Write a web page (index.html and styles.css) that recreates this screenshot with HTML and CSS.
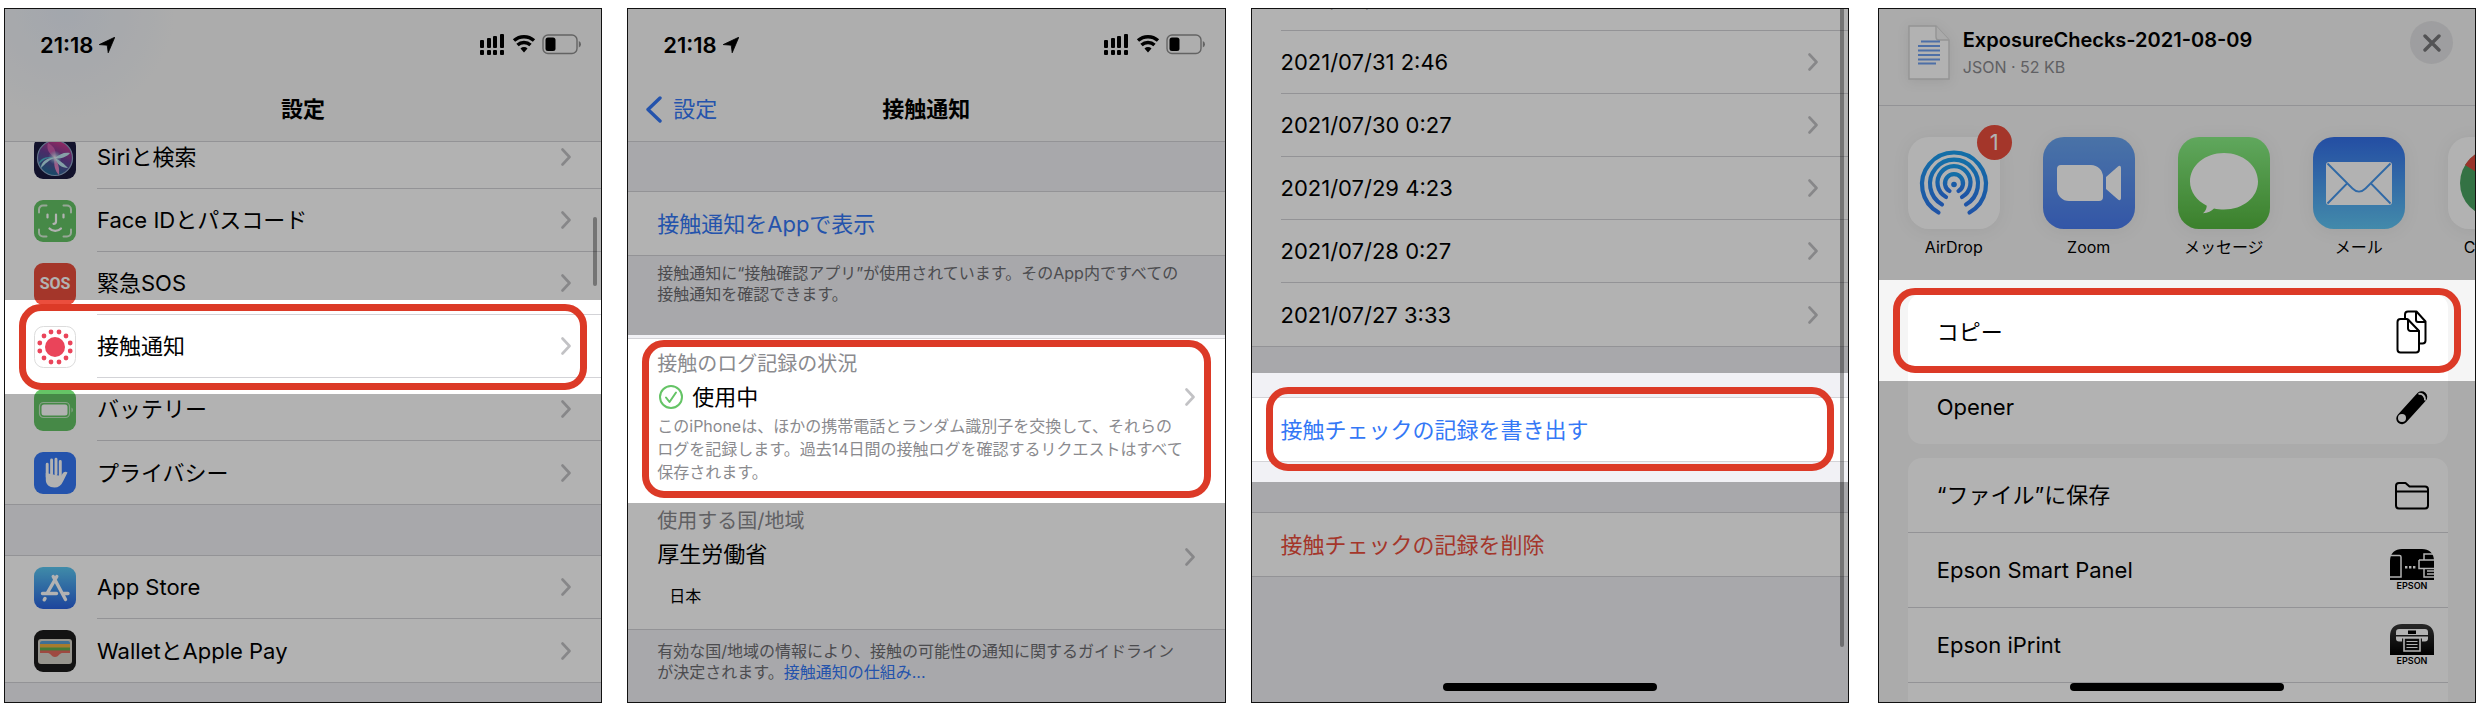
FILE: index.html
```html
<!DOCTYPE html>
<html lang="ja">
<head>
<meta charset="utf-8">
<meta name="viewport" content="width=device-width, initial-scale=1">
<title>接触通知の記録を書き出す手順</title>
<link rel="stylesheet" href="styles.css">
</head>
<body>
<svg class="defs" width="0" height="0" aria-hidden="true">
  <defs>
    <linearGradient id="g-store" x1="0" y1="0" x2="0" y2="1"><stop offset="0" stop-color="#5cc8f2"/><stop offset="1" stop-color="#2a63e0"/></linearGradient>
    <linearGradient id="g-zoom" x1="0" y1="0" x2="0" y2="1"><stop offset="0" stop-color="#6aa5f0"/><stop offset="1" stop-color="#4a7cf0"/></linearGradient>
    <linearGradient id="g-msg" x1="0" y1="0" x2="0" y2="1"><stop offset="0" stop-color="#8af086"/><stop offset="1" stop-color="#55b83f"/></linearGradient>
    <linearGradient id="g-mail" x1="0" y1="0" x2="0" y2="1"><stop offset="0" stop-color="#3470ea"/><stop offset="1" stop-color="#60c6f5"/></linearGradient>
    <linearGradient id="g-air" x1="0" y1="0" x2="0" y2="1"><stop offset="0" stop-color="#1c9ff0"/><stop offset="1" stop-color="#2d78ee"/></linearGradient>
    <linearGradient id="g-siri" x1=".7" y1="0" x2=".3" y2="1"><stop offset="0" stop-color="#d63a8c"/><stop offset=".45" stop-color="#6a3f96"/><stop offset="1" stop-color="#1c6f96"/></linearGradient>
    <radialGradient id="g-glow" cx=".5" cy=".5" r=".5"><stop offset="0" stop-color="#fff" stop-opacity=".9"/><stop offset="1" stop-color="#7fe0f0" stop-opacity="0"/></radialGradient>
    <linearGradient id="g-print" x1="0" y1="0" x2="0" y2="1"><stop offset="0" stop-color="#3a3a3a"/><stop offset="1" stop-color="#000"/></linearGradient>
    <symbol id="chev" viewBox="0 0 10 18"><path d="M1.5 1.5 8.5 9l-7 7.500" fill="none" stroke="#c2c2c5" stroke-width="2.600" stroke-linecap="round" stroke-linejoin="round"/></symbol>
    <symbol id="loc" viewBox="0 0 16 16"><path d="M15.800 0.200 9.200 15.800 8.200 8.200.2 7.600z" stroke="#000" stroke-width=".8" stroke-linejoin="round"/></symbol>
    <symbol id="signals" viewBox="0 0 102 24">
      <g><rect x="1" y="7" width="4" height="8" rx="1"/><rect x="8" y="5" width="4" height="10" rx="1"/><rect x="14" y="3" width="4" height="12" rx="1"/><rect x="21" y="1" width="4" height="14" rx="1"/>
      <rect x="1" y="17" width="4" height="5" rx="1"/><rect x="8" y="17" width="4" height="5" rx="1"/><rect x="14" y="17" width="4" height="5" rx="1"/><rect x="21" y="17" width="4" height="5" rx="1"/></g>
      <g fill="none" stroke="#000" stroke-width="3.400"><path d="M35 7.500a15 15 0 0 1 20 0"/><path d="M38.500 12a9.500 9.500 0 0 1 13 0"/></g><path d="M45 19.500l-3.500-4a5 5 0 0 1 7 0z"/>
      <rect x="64" y="2" width="34" height="18.500" rx="5" fill="none" stroke="#8f8f8f" stroke-width="1.400"/><rect x="66.500" y="4.500" width="10" height="13.500" rx="2.500"/><path d="M99.800 8a3.500 3.500 0 0 1 0 6.500z" fill="#8f8f8f"/>
    </symbol>
  </defs>
</svg>

<main class="steps">
  <!-- 設定 -->
  <section class="screen">
    <header class="nav nav-tint">
      <div class="status"><span class="clock">21:18 <svg class="loc" aria-hidden="true"><use href="#loc"/></svg></span><svg class="signals" aria-hidden="true"><use href="#signals"/></svg></div>
      <div class="bar"><h1 class="title">設定</h1></div>
    </header>
    <nav class="list list-under">
      <a class="row" href="#siri"><svg class="app" viewBox="0 0 42 42" aria-hidden="true"><rect width="42" height="42" rx="9" fill="#1b1b40"/><circle cx="21" cy="21" r="17.500" fill="url(#g-siri)" stroke="#8fa8c8" stroke-width="1.200"/><path d="M21 21c-7-1-11 1-16 6 0-5 8-9 16-6z" fill="#4fd0d8" opacity=".8"/><path d="M21 21C15 17 12 12 14 6c6 3 9 8 7 15z" fill="#e66ab8" opacity=".7"/><path d="M21 21c-5 1-10 6-14 10 0-6 7-11 14-10zM21 21c5-4 9-6 15-5-3 4-9 6-15 5zM21 21c6 3 9 6 13 10-6 0-12-4-13-10z" fill="#c8f6fa" opacity=".9"/><path d="M20.500 21c4 5 5 10 4.500 17-4-4-5.500-10-4.500-17z" fill="#f08cc8" opacity=".9"/><circle cx="21" cy="20.500" r="7" fill="url(#g-glow)"/></svg><span class="cell">Siriと検索<svg class="chev" aria-hidden="true"><use href="#chev"/></svg></span></a>
      <a class="row" href="#faceid"><svg class="app" viewBox="0 0 42 42" aria-hidden="true"><rect width="42" height="42" rx="9" fill="#65c466"/><g fill="none" stroke="#fff" stroke-linecap="round"><path d="M5 12.500V9.500a4 4 0 0 1 4-4h3.500M29.500 5.500H33a4 4 0 0 1 4 4v3M37 29.500v3a4 4 0 0 1-4 4h-3.500M12.500 36.500H9a4 4 0 0 1-4-4v-3" stroke-width="2" opacity=".75"/><path d="M13.500 14.500v3M29.500 14.500v3M22 14.500v7c0 1.500-.8 2.300-2.500 2.300M15.500 28.500c3 3.200 8.500 3.200 11.500 0" stroke-width="2.200"/></g></svg><span class="cell">Face IDとパスコード<svg class="chev" aria-hidden="true"><use href="#chev"/></svg></span></a>
      <a class="row" href="#sos"><span class="app sos" aria-hidden="true">SOS</span><span class="cell">緊急SOS<svg class="chev" aria-hidden="true"><use href="#chev"/></svg></span></a>
      <a class="row focus focus-row" href="#exposure"><svg class="app" viewBox="0 0 42 42" aria-hidden="true"><rect x=".5" y=".5" width="41" height="41" rx="9" fill="#fff" stroke="#dcdcdc"/><g fill="#ea445a"><circle cx="21" cy="21" r="10"/><circle cx="17" cy="6" r="2.400"/><circle cx="25" cy="6" r="2.400"/><circle cx="32" cy="10" r="2.400"/><circle cx="36.200" cy="17" r="2.400"/><circle cx="36.200" cy="25" r="2.400"/><circle cx="32" cy="32" r="2.400"/><circle cx="25" cy="36" r="2.400"/><circle cx="17" cy="36" r="2.400"/><circle cx="10" cy="32" r="2.400"/><circle cx="5.800" cy="25" r="2.400"/><circle cx="5.800" cy="17" r="2.400"/><circle cx="10" cy="10" r="2.400"/></g></svg><span class="cell">接触通知<svg class="chev" aria-hidden="true"><use href="#chev"/></svg></span></a>
      <a class="row" href="#battery"><svg class="app" viewBox="0 0 42 42" aria-hidden="true"><rect width="42" height="42" rx="9" fill="#65c466"/><rect x="5.500" y="13.500" width="30" height="15" rx="4" fill="none" stroke="#c3e8c3" stroke-width="1.200"/><rect x="7.500" y="15.500" width="26" height="11" rx="2.500" fill="#fff"/><path d="M37.500 18.500a3 3 0 0 1 0 5z" fill="#c3e8c3"/></svg><span class="cell">バッテリー<svg class="chev" aria-hidden="true"><use href="#chev"/></svg></span></a>
      <a class="row row-last" href="#privacy"><svg class="app" viewBox="0 0 42 42" aria-hidden="true"><rect width="42" height="42" rx="9" fill="#3478f6"/><path d="M11.800 21v7c0 4.500 3.500 7.500 8.700 7.500 4 0 6.500-2 8.500-6l4.500-9c-2-1.300-3.700-.6-5 1.200L27 24z" fill="#fff"/><path d="M13.200 25V12.200M17.600 22V8M22 22V7.200M26.300 24V9.500" stroke="#fff" stroke-width="2.900" stroke-linecap="round"/></svg><span class="cell">プライバシー<svg class="chev" aria-hidden="true"><use href="#chev"/></svg></span></a>
    </nav>
    <nav class="list list-gap">
      <a class="row" href="#store"><svg class="app" viewBox="0 0 42 42" aria-hidden="true"><rect width="42" height="42" rx="9" fill="url(#g-store)"/><g stroke="#fff" stroke-width="3.400" stroke-linecap="round"><path d="M22.800 9.500 13 26.500M19.200 9.500 31.500 32.500M8.500 26.500h14M29 26.500h5M11 31.500l-.8 1.300"/></g></svg><span class="cell">App Store<svg class="chev" aria-hidden="true"><use href="#chev"/></svg></span></a>
      <a class="row row-last" href="#wallet"><svg class="app" viewBox="0 0 42 42" aria-hidden="true"><rect width="42" height="42" rx="9" fill="#1c1c1c"/><rect x="4" y="9" width="34" height="25" rx="3" fill="#d9d6cc"/><path d="M6 13a2 2 0 0 1 2-2h26a2 2 0 0 1 2 2v2H6z" fill="#5a9fd6"/><path d="M6 14h30v4H6z" fill="#efb041"/><path d="M6 17.500h30v4H6z" fill="#62b150"/><path d="M6 20.500h30v2.500h-8c-2.500 0-3.500 4-7 4s-4.500-4-7-4H6z" fill="#e2695c"/></svg><span class="cell">WalletとApple Pay<svg class="chev" aria-hidden="true"><use href="#chev"/></svg></span></a>
    </nav>
    <div class="scrollbar scrollbar-mid"></div>
  </section>

  <!-- 接触通知 -->
  <section class="screen">
    <header class="nav">
      <div class="status"><span class="clock">21:18 <svg class="loc" aria-hidden="true"><use href="#loc"/></svg></span><svg class="signals" aria-hidden="true"><use href="#signals"/></svg></div>
      <div class="bar"><a class="back" href="#settings"><svg viewBox="0 0 17 27" aria-hidden="true"><path d="M15 2 3 13.500 15 25" fill="none" stroke="#3478f6" stroke-width="3.400" stroke-linecap="round" stroke-linejoin="round"/></svg>設定</a><h1 class="title">接触通知</h1></div>
    </header>
    <div class="list list-gap list-gap-nav">
      <a class="row row-last link" href="#app"><span class="cell">接触通知をAppで表示</span></a>
    </div>
    <p class="note">接触通知に“接触確認アプリ”が使用されています。そのApp内ですべての<br>接触通知を確認できます。</p>
    <div class="list">
      <a class="block focus focus-log" href="#log">
        <span class="label">接触のログ記録の状況</span>
        <span class="value"><svg class="check" viewBox="0 0 24 24" aria-hidden="true"><circle cx="12" cy="12" r="11" fill="none" stroke="#65c466" stroke-width="2"/><path d="m7 12.500 3.500 4.500L17 7.500" fill="none" stroke="#65c466" stroke-width="2" stroke-linecap="round" stroke-linejoin="round"/></svg>使用中<svg class="chev" aria-hidden="true"><use href="#chev"/></svg></span>
        <span class="detail">このiPhoneは、ほかの携帯電話とランダム識別子を交換して、それらの<br>ログを記録します。過去14日間の接触ログを確認するリクエストはすべて<br>保存されます。</span>
      </a>
      <a class="block block-region" href="#region">
        <span class="region-text"><span class="label">使用する国/地域</span><span class="value">厚生労働省</span><span class="country">日本</span></span>
        <svg class="chev" aria-hidden="true"><use href="#chev"/></svg>
      </a>
    </div>
    <p class="note note-foot">有効な国/地域の情報により、接触の可能性の通知に関するガイドライン<br>が決定されます。<a class="link" href="#how">接触通知の仕組み...</a></p>
  </section>

  <!-- 接触チェックの記録 -->
  <section class="screen">
    <div class="list list-cut">
      <a class="row" href="#0801"><span class="cell">2021/08/01 0:27<svg class="chev" aria-hidden="true"><use href="#chev"/></svg></span></a>
      <a class="row" href="#0731"><span class="cell">2021/07/31 2:46<svg class="chev" aria-hidden="true"><use href="#chev"/></svg></span></a>
      <a class="row" href="#0730"><span class="cell">2021/07/30 0:27<svg class="chev" aria-hidden="true"><use href="#chev"/></svg></span></a>
      <a class="row" href="#0729"><span class="cell">2021/07/29 4:23<svg class="chev" aria-hidden="true"><use href="#chev"/></svg></span></a>
      <a class="row" href="#0728"><span class="cell">2021/07/28 0:27<svg class="chev" aria-hidden="true"><use href="#chev"/></svg></span></a>
      <a class="row row-last" href="#0727"><span class="cell">2021/07/27 3:33<svg class="chev" aria-hidden="true"><use href="#chev"/></svg></span></a>
    </div>
    <div class="list list-gap">
      <button class="row row-last focus focus-export link" type="button"><span class="cell">接触チェックの記録を書き出す</span></button>
    </div>
    <div class="list list-gap">
      <button class="row row-last danger" type="button"><span class="cell">接触チェックの記録を削除</span></button>
    </div>
    <div class="scrollbar scrollbar-long"></div>
    <div class="home"></div>
  </section>

  <!-- 共有シート -->
  <section class="screen sheet">
    <header class="file">
      <svg class="doc" viewBox="0 0 42 55" aria-hidden="true"><path d="M1 1h27l13 14v39H1z" fill="#fff" stroke="#d4d4d4" stroke-width="1.400"/><path d="M28 1v11a3 3 0 0 0 3 3h10" fill="#f4f4f4" stroke="#d4d4d4" stroke-width="1.400"/><path d="M13 16.500h19M10 21h22M10 25.500h22M10 30h22M10 34.500h22M10 38.500h18" stroke="#6f9ff0" stroke-width="2"/></svg>
      <div class="file-text"><h1 class="file-name">ExposureChecks-2021-08-09</h1><p class="file-meta">JSON · 52 KB</p></div>
      <button class="close" type="button" aria-label="閉じる"><svg viewBox="0 0 18 18" aria-hidden="true"><path d="m2 2 14 14M16 2 2 16" stroke="#77777a" stroke-width="3.400" stroke-linecap="round"/></svg></button>
    </header>
    <nav class="apps">
      <a class="target" href="#airdrop"><svg class="big" viewBox="0 0 92 92" aria-hidden="true"><rect width="92" height="92" rx="21" fill="#fff"/><g fill="none" stroke="url(#g-air)" stroke-width="4.200" stroke-linecap="round"><path d="M30.500 75.500a32 32 0 1 1 31 0"/><path d="M34 67.500a24 24 0 1 1 24 0"/><path d="M38 60a16.500 16.500 0 1 1 16 0"/><path d="M41.500 54a9 9 0 1 1 9 0"/></g><circle cx="46" cy="47.500" r="2.800" fill="#2483ee"/></svg><span class="badge">1</span><span class="app-name">AirDrop</span></a>
      <a class="target" href="#zoom"><svg class="big" viewBox="0 0 92 92" aria-hidden="true"><rect width="92" height="92" rx="21" fill="url(#g-zoom)"/><path d="M14 32a4 4 0 0 1 4-4h30a12 12 0 0 1 12 12v20a4 4 0 0 1-4 4H26a12 12 0 0 1-12-12zM63 40l12-10.500c1.500-1.300 3-.6 3 1.500v30c0 2-1.500 2.800-3 1.500L63 52z" fill="#fff"/></svg><span class="app-name">Zoom</span></a>
      <a class="target" href="#message"><svg class="big" viewBox="0 0 92 92" aria-hidden="true"><rect width="92" height="92" rx="21" fill="url(#g-msg)"/><path d="M46 16c19 0 34 12.500 34 28.500S65 72.500 46 72.500c-3.500 0-7-.4-10-1-2.500 2.500-6 4.300-11 4.800 2.200-2 3.600-4.500 3.800-7.600C18.500 63.500 12 54.500 12 44.500 12 28.500 27 16 46 16z" fill="#fff"/></svg><span class="app-name">メッセージ</span></a>
      <a class="target" href="#mail"><svg class="big" viewBox="0 0 92 92" aria-hidden="true"><rect width="92" height="92" rx="21" fill="url(#g-mail)"/><rect x="13" y="25" width="66" height="43" rx="3" fill="#fff"/><path d="m14.500 26.500 25 25c4 4 9 4 13 0l25-25M14.500 66.500 34 46.500M77.500 66.500 58 46.500" fill="none" stroke="#4597ee" stroke-width="1.800"/></svg><span class="app-name">メール</span></a>
      <a class="target" href="#chrome"><svg class="big" viewBox="0 0 92 92" aria-hidden="true"><rect width="92" height="92" rx="21" fill="#fff"/><circle cx="46" cy="46" r="34" fill="#4ba462"/><path d="M46 46 17 28a34 34 0 0 1 58 0z" fill="#dd4b3e"/><path d="M46 46l29-18a34 34 0 0 1-29 52z" fill="#f8cf4a"/><circle cx="46" cy="46" r="15" fill="#4a8af4" stroke="#fff" stroke-width="3"/></svg><span class="app-name">Chrome</span></a>
    </nav>
    <div class="card card-top">
      <button class="action focus focus-copy" type="button">コピー<svg class="glyph" viewBox="0 0 44 44" aria-hidden="true"><g fill="#fff" stroke="#000" stroke-width="2" stroke-linejoin="round"><path d="M18 1.500h8.500l9 10v19a3 3 0 0 1-3 3H18a3 3 0 0 1-3-3v-26a3 3 0 0 1 3-3z"/><path d="M26 2v8a2 2 0 0 0 2 2h7.500" fill="none"/><path d="M10.500 9H17l12 12.500v18a3 3 0 0 1-3 3H10.500a3 3 0 0 1-3-3V12a3 3 0 0 1 3-3z"/><path d="M18 9.500v9a2.500 2.500 0 0 0 2.500 2.500H29z"/></g></svg></button>
      <button class="action" type="button">Opener<svg class="glyph" viewBox="0 0 44 44" aria-hidden="true"><path d="M12 33.500 31.500 12" stroke="#000" stroke-width="11.500" stroke-linecap="round"/><circle cx="12" cy="33" r="4" fill="#fff"/><path d="M28.500 9a5.500 5.500 0 0 1 6.500 6.500" fill="none" stroke="#fff" stroke-width="2"/></svg></button>
    </div>
    <div class="card">
      <button class="action" type="button">“ファイル”に保存<svg class="glyph" viewBox="0 0 44 44" aria-hidden="true"><path d="M6 32.500V13a3 3 0 0 1 3-3h6.500l4 3.500H35a3 3 0 0 1 3 3v16a3 3 0 0 1-3 3H9a3 3 0 0 1-3-3zM6 18.500h32" fill="none" stroke="#000" stroke-width="2" stroke-linejoin="round"/></svg></button>
      <button class="action" type="button">Epson Smart Panel<span class="epson" aria-hidden="true"><svg viewBox="0 0 44 31"><path d="M0 31V12C0 4 5 0 12 0h20c7 0 12 4 12 12v19z"/><g fill="none" stroke="#fff" stroke-width="1.500"><path d="M0 6.500h9.500a1.500 1.500 0 0 1 1.500 1.500v20H0M29 11h15M29 11v8.500h15M34 11V5h10M34 19.500V28h10M37 22h7M37 25h7"/></g><path d="M15 17h2.400v2.400H15zM19 17h2.400v2.400H19zM23 17h2.400v2.400H23z" fill="#fff"/></svg>EPSON</span></button>
      <button class="action" type="button">Epson iPrint<span class="epson" aria-hidden="true"><svg viewBox="0 0 44 31"><path d="M0 31V12C0 4 5 0 12 0h20c7 0 12 4 12 12v19z" fill="url(#g-print)"/><path d="M9 5h26a3 3 0 0 1 3 3v3H6V8a3 3 0 0 1 3-3zM6 12.500h32v2a3 3 0 0 1-3 3h-3v-3H12v3H9a3 3 0 0 1-3-3z" fill="#fff"/><path d="M18 6.500h8V10h-8z"/><path d="M14 14h16v13H14z" fill="#111" stroke="#fff" stroke-width="1.600"/><path d="M16.500 17.500h11M16.500 20.500h11M16.500 23.500h11" stroke="#fff" stroke-width="1.200"/></svg>EPSON</span></button>
      <div class="action"></div>
    </div>
    <div class="home"></div>
  </section>
</main>
</body>
</html>
```

FILE: styles.css
```css
* {
  box-sizing: border-box;
}

:root {
  --ink: #000;
  --blue: #3478f6;
  --red: #dc3a27;
  --line: #d3d3d7;
  --group: #f1f1f5;
  --muted: #8a8a8e;
  --row: 63px;
}

body {
  margin: 0;
  background: #fff;
  color: var(--ink);
  font-family: Inter, "Noto Sans CJK JP", sans-serif;
  font-size: 22px;
  line-height: 28px;
}

h1,
p {
  margin: 0;
  font-weight: 400;
}

a {
  color: inherit;
  text-decoration: none;
}

button {
  border: 0;
  background: none;
  color: inherit;
  font: inherit;
  text-align: left;
}

svg {
  display: block;
  flex: none;
}

.defs {
  position: absolute;
}

.steps {
  display: flex;
  gap: 25px;
  height: 100vh;
  padding: 8px 6px 5px 4px;
}

.screen {
  position: relative;
  isolation: isolate;
  flex: 1 1 0;
  min-width: 0;
  overflow: hidden;
  border: 1px solid #111;
  background: var(--group);
}

/* Highlighted item: everything else in the screen is dimmed */
.focus {
  position: relative;
}

.focus::before,
.focus::after {
  content: "";
  position: absolute;
  pointer-events: none;
}

.focus::before {
  z-index: 5;
  inset: var(--clear-top) 0 var(--clear-bottom);
  box-shadow: 0 0 0 1000px rgba(0, 0, 0, 0.3);
}

.focus::after {
  z-index: 6;
  inset: var(--ring-top) 14px var(--ring-bottom);
  border: 7px solid var(--red);
  border-radius: 22px;
}

.focus-row {
  --clear-top: -15px;
  --clear-bottom: -16px;
  --ring-top: -11px;
  --ring-bottom: -12px;
}

.focus-log {
  --clear-top: -4px;
  --clear-bottom: -8px;
  --ring-top: 1px;
  --ring-bottom: -3px;
}

.focus-export {
  --clear-top: -25px;
  --clear-bottom: -21px;
  --ring-top: -11px;
  --ring-bottom: -10px;
}

.focus-copy {
  --clear-top: -14px;
  --clear-bottom: -12px;
  --ring-top: -6px;
  --ring-bottom: -4px;
}

/* Navigation bar */
.nav {
  position: relative;
  z-index: 1;
  border-bottom: 1px solid var(--line);
  background: #fafafa;
}

.nav-tint {
  background: radial-gradient(circle at 60px 0, #e9eff8, #f6f6f6 110px);
}

.status {
  display: flex;
  justify-content: space-between;
  align-items: center;
  padding: 22px 20px 0 35px;
}

.clock {
  display: flex;
  align-items: center;
  gap: 6px;
  font-weight: 600;
}

.loc {
  width: 16px;
  height: 16px;
}

.signals {
  width: 102px;
  height: 24px;
}

.bar {
  display: grid;
  grid-template-columns: 1fr auto 1fr;
  align-items: center;
  height: 82px;
  padding: 18px 17px 0;
}

.title {
  grid-column: 2;
  font-size: 22px;
  font-weight: 700;
}

.back {
  display: flex;
  align-items: center;
  gap: 11px;
  color: var(--blue);
  font-size: 22px;
}

.back svg {
  width: 17px;
  height: 27px;
}

/* Lists */
.list {
  border-top: 1px solid var(--line);
  border-bottom: 1px solid var(--line);
  background: #fff;
}

.list-under,
.list-cut {
  border-top: 0;
}

.list-under {
  margin-top: -16px;
}

.list-cut {
  margin-top: -41px;
}

.list-gap {
  margin-top: 50px;
}

.list-gap-nav {
  margin-top: 49px;
}

.row {
  display: flex;
  align-items: center;
  gap: 21px;
  width: 100%;
  height: var(--row);
  padding: 0 0 0 29px;
}

.cell {
  flex: 1;
  display: flex;
  justify-content: space-between;
  align-items: center;
  align-self: stretch;
  padding-right: 30px;
  border-bottom: 1px solid var(--line);
}

.row-last .cell {
  border-bottom: 0;
}

.app {
  flex: none;
  width: 42px;
  height: 42px;
}

.sos {
  border-radius: 9px;
  background: #eb4e3d;
  color: #fff;
  font-family: Roboto, sans-serif;
  font-size: 16px;
  font-weight: 700;
  line-height: 42px;
  text-align: center;
}

.chev {
  width: 10px;
  height: 18px;
}

.link {
  color: var(--blue);
}

.danger {
  color: #eb4e3d;
}

.note {
  padding: 7px 29px 33px;
  color: #6d6d72;
  font-size: 16px;
  line-height: 21px;
  white-space: nowrap;
}

.note-foot {
  padding-top: 11px;
}

.block {
  display: flex;
  flex-direction: column;
  padding: 10px 30px 11px 29px;
}

.label {
  color: var(--muted);
  font-size: 20px;
  line-height: 30px;
}

.value {
  display: flex;
  align-items: center;
  gap: 9px;
  line-height: 36px;
}

.value .chev {
  margin-left: auto;
}

.check {
  width: 24px;
  height: 24px;
  margin-left: 2px;
}

.detail {
  color: var(--muted);
  font-size: 16px;
  line-height: 23px;
  white-space: nowrap;
}

.block-region {
  flex-direction: row;
  justify-content: space-between;
  align-items: center;
  padding: 11px 30px 21px 29px;
}

.region-text {
  display: flex;
  flex-direction: column;
}

.country {
  padding: 12px 0 0 12px;
  font-size: 16px;
  line-height: 24px;
}

/* Overlaid scroll and home indicators */
.scrollbar {
  position: absolute;
  right: 4px;
  width: 4px;
  border-radius: 2px;
  background: rgba(0, 0, 0, 0.35);
}

.scrollbar-mid {
  top: 30%;
  height: 10%;
}

.scrollbar-long {
  top: -10px;
  bottom: 8%;
}

.home {
  position: absolute;
  z-index: 7;
  bottom: 11px;
  left: 50%;
  width: 214px;
  height: 8px;
  margin-left: -107px;
  border-radius: 4px;
  background: #000;
}

/* Share sheet */
.sheet {
  margin-left: 4px;
  background: #f5f5f5;
}

.file {
  display: flex;
  align-items: flex-start;
  gap: 13px;
  height: 97px;
  padding: 16px 22px 0 29px;
  border-bottom: 1px solid var(--line);
}

.doc {
  width: 42px;
  height: 55px;
  filter: drop-shadow(0 2px 6px rgba(0, 0, 0, 0.08));
}

.file-text {
  flex: 1;
}

.file-name {
  font-size: 20px;
  font-weight: 600;
  line-height: 30px;
}

.file-meta {
  color: var(--muted);
  font-size: 16px;
  line-height: 24px;
}

.close {
  display: grid;
  place-items: center;
  width: 43px;
  height: 43px;
  margin-top: -4px;
  padding: 0;
  border-radius: 50%;
  background: #e3e3e5;
}

.close svg {
  width: 18px;
  height: 18px;
}

.apps {
  display: flex;
  gap: 43px;
  padding: 31px 0 35px 29px;
}

.target {
  position: relative;
  flex: none;
  display: flex;
  flex-direction: column;
  align-items: center;
  gap: 6px;
  width: 92px;
}

.big {
  width: 92px;
  height: 92px;
  filter: drop-shadow(0 2px 8px rgba(0, 0, 0, 0.06));
}

.badge {
  position: absolute;
  top: -12px;
  right: -12px;
  width: 35px;
  height: 35px;
  border-radius: 50%;
  background: #eb4e3d;
  color: #fff;
  line-height: 35px;
  text-align: center;
}

.app-name {
  font-size: 16px;
  line-height: 24px;
  white-space: nowrap;
}

.card {
  margin: 0 27px 14px 29px;
  border-radius: 14px;
  background: #fff;
}

.action {
  display: flex;
  justify-content: space-between;
  align-items: center;
  width: 100%;
  height: 75px;
  padding: 0 14px 0 29px;
  border-bottom: 1px solid var(--line);
}

.card-top .action {
  border-bottom: 0;
}

.focus-copy::before {
  left: -29px;
  right: -27px;
}

.focus-copy::after {
  left: -15px;
  right: -13px;
}

.glyph {
  width: 44px;
  height: 44px;
}

.epson {
  width: 44px;
  font-size: 9px;
  font-weight: 600;
  line-height: 12px;
  text-align: center;
}
```
